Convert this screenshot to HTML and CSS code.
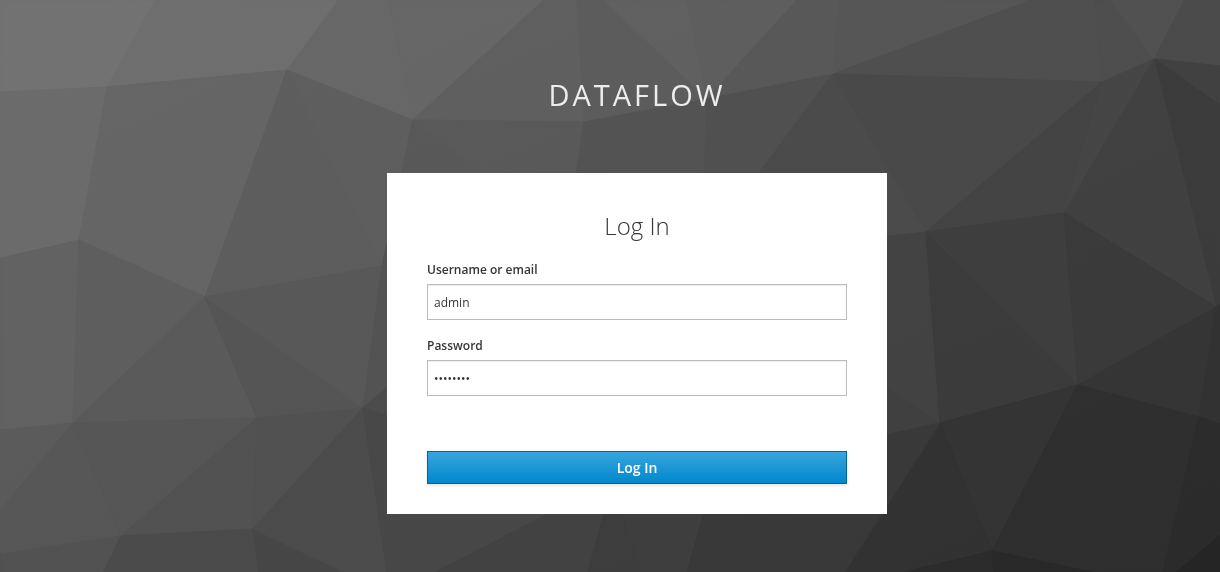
FILE: index.html
```html
<!DOCTYPE html>
<html lang="en">
<head>
<meta charset="utf-8">
<title>Log in to Dataflow</title>
<link rel="stylesheet" href="styles.css">
</head>
<body>
<svg class="backdrop" viewBox="0 0 1220 572" preserveAspectRatio="xMidYMid slice" aria-hidden="true">
  <defs>
    <linearGradient id="shade" x1="0" y1="0" x2="1" y2="1">
      <stop offset="0" stop-color="#fff" stop-opacity=".01"/>
      <stop offset="1" stop-color="#000" stop-opacity=".02"/>
    </linearGradient>
  </defs>
  <g id="facets">
    <!-- left side -->
    <path color="#717171" d="M0 0H154L106 86L0 91z"/>
    <path color="#6d6d6d" d="M154 0H337L286 69L106 86z"/>
    <path color="#6a6a6a" d="M0 91L106 86L78 239L0 257z"/>
    <path color="#646464" d="M106 86L286 69L204 296L78 239z"/>
    <path color="#666666" d="M337 0H388L412 119L286 69z"/>
    <path color="#656565" d="M388 0H542L412 119z"/>
    <path color="#5c5c5c" d="M286 69L381 265L204 296z"/>
    <path color="#5d5d5d" d="M286 69L412 119L381 265z"/>
    <path color="#616161" d="M0 257L78 239L72 422L0 429z"/>
    <path color="#5d5d5d" d="M78 239L204 296L72 422z"/>
    <path color="#595959" d="M204 296L256 417L72 422z"/>
    <path color="#545454" d="M204 296L362 407L256 417z"/>
    <path color="#575757" d="M204 296L381 265L362 407z"/>
    <path color="#525252" d="M412 119L500 380H393L362 407L381 265z"/>
    <path color="#5a5a5a" d="M0 429L72 422L0 508z"/>
    <path color="#565656" d="M72 422L120 535L0 553V508z"/>
    <path color="#555555" d="M72 422L256 417L120 535z"/>
    <path color="#515151" d="M256 417L252 528L120 535z"/>
    <path color="#505050" d="M256 417L362 407L252 528z"/>
    <path color="#515151" d="M0 553L120 535L102 572H0z"/>
    <path color="#4a4a4a" d="M120 535L252 528L258 572H102z"/>
    <path color="#464646" d="M252 528L344 572H258z"/>
    <path color="#4b4b4b" d="M252 528L362 407L386 572H344z"/>
    <path color="#4b4b4b" d="M362 407L393 380V417z"/>
    <path color="#474747" d="M362 407L387 415L545 514L433 572H386z"/>
    <!-- top middle -->
    <path color="#5e5e5e" d="M542 0H576L583 121L412 119z"/>
    <path color="#5b5b5b" d="M576 0H604L706 98L583 121z"/>
    <path color="#5f5f5f" d="M604 0H686L706 98z"/>
    <path color="#5d5d5d" d="M686 0H795L706 98z"/>
    <path color="#575757" d="M795 0H838L832 73L706 98z"/>
    <path color="#585858" d="M412 119L583 121L575 173H482z"/>
    <path color="#575757" d="M412 119L482 173L500 240L400 175z"/>
    <path color="#525252" d="M583 121L706 98L703 180H574z"/>
    <path color="#4f4f4f" d="M706 98L832 73L757 180H703z"/>
    <path color="#4a4a4a" d="M832 73L925 231L887 236V180H752z"/>
    <!-- right side -->
    <path color="#555555" d="M838 0H1028L832 73z"/>
    <path color="#4e4e4e" d="M1028 0H1094L1101 81L832 73z"/>
    <path color="#4d4d4d" d="M1094 0H1110L1153 58L1101 81z"/>
    <path color="#505050" d="M1110 0H1183L1153 58z"/>
    <path color="#4a4a4a" d="M1183 0H1220V65L1153 58z"/>
    <path color="#484848" d="M832 73L1101 81L925 231z"/>
    <path color="#434343" d="M1101 81L1063 212L925 231z"/>
    <path color="#454545" d="M1101 81L1153 58L1063 212z"/>
    <path color="#404040" d="M1153 58L1220 65V105z"/>
    <path color="#3b3b3b" d="M1153 58L1220 105V303L1215 306z"/>
    <path color="#404040" d="M1153 58L1215 306L1063 212z"/>
    <path color="#424242" d="M880 236L925 231L939 422L880 383z"/>
    <path color="#3b3b3b" d="M925 231L1077 384L939 422z"/>
    <path color="#3e3e3e" d="M925 231L1063 212L1077 384z"/>
    <path color="#3a3a3a" d="M1063 212L1215 306L1077 384z"/>
    <path color="#353535" d="M1215 306L1198 416L1077 384z"/>
    <path color="#323232" d="M1215 306L1220 303V423L1198 416z"/>
    <path color="#404040" d="M880 383L939 422L880 435z"/>
    <path color="#343434" d="M939 422L1077 384L991 550z"/>
    <path color="#323232" d="M939 422L991 550L900 572H843z"/>
    <path color="#2f2f2f" d="M1077 384L1198 416L1162 572H1095L991 550z"/>
    <path color="#2c2c2c" d="M1198 416L1220 423V534L1174 572H1162z"/>
    <path color="#262626" d="M1220 534V572H1174z"/>
    <path color="#2c2c2c" d="M991 550L993 572H900z"/>
    <path color="#292929" d="M991 550L1095 572H993z"/>
    <!-- bottom middle -->
    <path color="#424242" d="M545 514L605 505L587 572H433z"/>
    <path color="#3d3d3d" d="M605 505H619L640 572H587z"/>
    <path color="#3e3e3e" d="M619 505H705L686 572H640z"/>
    <path color="#393939" d="M705 505L880 435L939 422L843 572H686z"/>
  </g>
  <!-- second pass covers the seams between facets -->
  <use href="#facets" x="1" y="1"/>
  <rect width="1220" height="572" fill="url(#shade)"/>
</svg>
<div class="page">
  <header class="brand">Dataflow</header>
  <main class="card">
    <h1 class="card-title">Log In</h1>
    <form class="form">
      <div class="field">
        <label class="label" for="username">Username or email</label>
        <input class="input" id="username" name="username" type="text" value="admin">
      </div>
      <div class="field">
        <label class="label" for="password">Password</label>
        <input class="input" id="password" name="password" type="password" value="password">
      </div>
      <button class="submit" type="submit">Log In</button>
    </form>
  </main>
</div>
</body>
</html>
```
FILE: styles.css
```css
* {
  box-sizing: border-box;
}

body {
  margin: 0;
  background: #393939;
  color: #363636;
  font: 12px/20px "Open Sans", "Liberation Sans", sans-serif;
}

.backdrop {
  position: fixed;
  inset: 0;
  z-index: -1;
  width: 100%;
  height: 100%;
}

.backdrop path {
  fill: currentColor;
  stroke: currentColor;
  stroke-width: 1px;
}

.page {
  display: flex;
  flex-direction: column;
  align-items: center;
  padding: 76px 0 56px 54px;
}

.brand {
  margin-bottom: 59px;
  color: #ededed;
  font-size: 29px;
  line-height: 38px;
  letter-spacing: 3px;
  text-transform: uppercase;
}

.card {
  width: 100%;
  max-width: 500px;
  padding: 40px 40px 30px;
  background: #fff;
}

.card-title {
  margin: 0 0 21px;
  font-size: 24px;
  font-weight: 300;
  line-height: 26px;
  text-align: center;
}

.form {
  display: flex;
  flex-direction: column;
  gap: 16px;
}

.field {
  display: flex;
  flex-direction: column;
  gap: 4px;
}

.label {
  font-weight: 600;
}

.input {
  width: 100%;
  height: 36px;
  padding: 2px 6px;
  border: 1px solid #bbb;
  border-radius: 0;
  background: #fff;
  box-shadow: inset 0 1px 1px rgba(3, 3, 3, 0.075);
  color: #363636;
  font: inherit;
}

.submit {
  height: 33px;
  margin-top: 39px;
  padding: 0 10px;
  border: 1px solid #00659c;
  border-radius: 0;
  background: linear-gradient(#39a5dc, #0088ce);
  box-shadow: 0 2px 3px rgba(3, 3, 3, 0.1);
  color: #fff;
  font: inherit;
  font-size: 14px;
  font-weight: 600;
}
```
